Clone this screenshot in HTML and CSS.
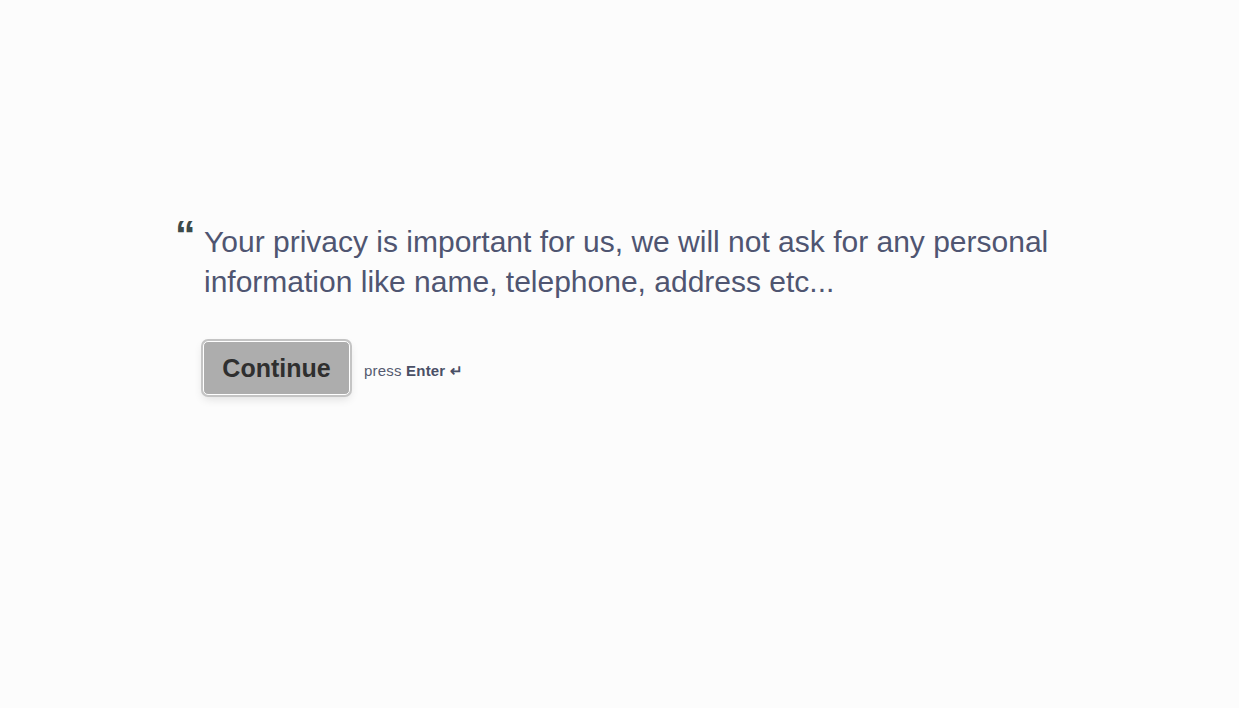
FILE: index.html
```html
<!DOCTYPE html>
<html lang="en">
<head>
<meta charset="utf-8">
<title>Privacy</title>
<link rel="stylesheet" href="styles.css">
</head>
<body>
<main class="page">
  <section class="question">
    <div class="quote">“</div>
    <div class="body">
      <p class="text">Your privacy is important for us, we will not ask for any personal information like name, telephone, address etc...</p>
      <div class="actions">
        <button class="btn" type="button">Continue</button>
        <span class="hint">press <b>Enter ↵</b></span>
      </div>
    </div>
  </section>
</main>
</body>
</html>
```
FILE: styles.css
```css
html, body {
  margin: 0;
  padding: 0;
  background: #fcfcfc;
  height: 100%;
}
body {
  font-family: "Liberation Sans", Arial, sans-serif;
}
.page {
  padding: 222px 0 0 172px;
}
.question {
  display: flex;
  width: 900px;
}
.quote {
  width: 32px;
  font-family: "Liberation Sans", Arial, sans-serif;
  font-weight: bold;
  font-size: 41px;
  line-height: 26px;
  color: #3d4b4b;
  padding-left: 3px;
  box-sizing: border-box;
}
.body {
  flex: 1;
}
.text {
  margin: 0;
  font-size: 30px;
  line-height: 40px;
  color: #4f5571;
}
.actions {
  display: flex;
  align-items: center;
  gap: 14px;
  margin-top: 39px;
  margin-left: -1px;
}
.btn {
  font-family: "Liberation Sans", Arial, sans-serif;
  font-weight: bold;
  font-size: 25px;
  color: #2f2f2f;
  background: #adadad;
  border: 1px solid #ffffff;
  border-radius: 5px;
  box-shadow: 0 0 0 2px #c4c4c4, 0 4px 10px rgba(0,0,0,0.12);
  padding: 0 10px;
  height: 54px;
  width: 147px;
}
.hint {
  font-size: 15px;
  letter-spacing: 0.2px;
  color: #555a70;
  padding-top: 6px;
}
.hint b {
  color: #4a5066;
}
```
